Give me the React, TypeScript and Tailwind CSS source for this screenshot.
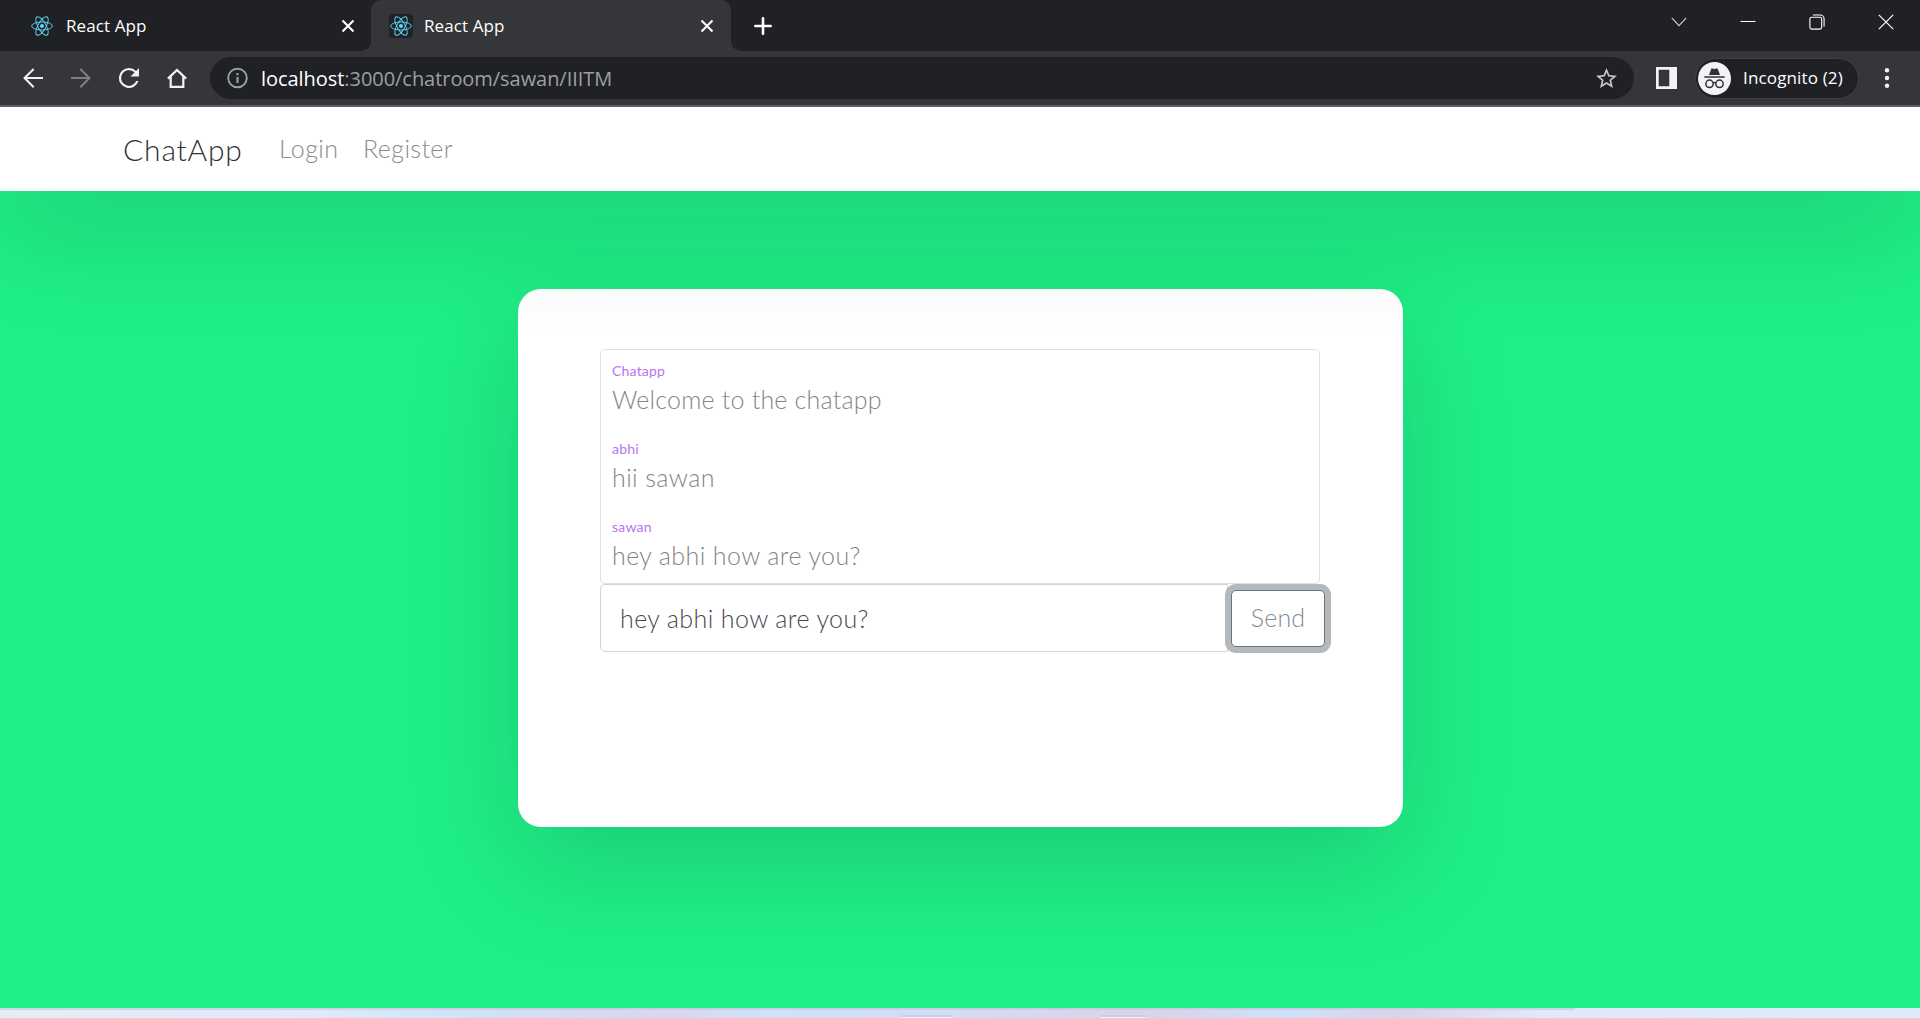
import React, { useState } from 'react';
import clsx from 'clsx';

interface Message {
  user: string;
  text: string;
}

const messages: Message[] = [
  { user: 'Chatapp', text: 'Welcome to the chatapp' },
  { user: 'abhi', text: 'hii sawan' },
  { user: 'sawan', text: 'hey abhi how are you?' },
];

const ReactLogo = () => (
  <svg width="24" height="24" viewBox="0 0 24 24" fill="none" stroke="#61dafb" strokeWidth="0.9">
    <circle cx="12" cy="12" r="2" fill="#61dafb" stroke="none" />
    <ellipse cx="12" cy="12" rx="10.4" ry="4" />
    <ellipse cx="12" cy="12" rx="10.4" ry="4" transform="rotate(60 12 12)" />
    <ellipse cx="12" cy="12" rx="10.4" ry="4" transform="rotate(120 12 12)" />
  </svg>
);

const TabClose = () => (
  <svg width="14" height="14" viewBox="0 0 14 14" stroke="#fff" strokeWidth="2.1">
    <path d="M1.5 1.5l11 11M12.5 1.5l-11 11" />
  </svg>
);

const TabStrip = () => (
  <div className="flex h-[51px] bg-[#202124] text-[17px] text-white">
    <div className="flex w-[371px] items-center pl-[30px] pr-[16px]">
      <ReactLogo />
      <span className="ml-[12px] tracking-[0.1px]">React App</span>
      <span className="ml-auto"><TabClose /></span>
    </div>
    <div className="relative flex w-[360px] items-center rounded-t-[10px] bg-[#35363a] pl-[18px] pr-[17px]">
      <svg className="absolute -left-[10px] bottom-0" width="10" height="10">
        <path d="M10 0v10H0A10 10 0 0 0 10 0z" fill="#35363a" />
      </svg>
      <svg className="absolute -right-[10px] bottom-0" width="10" height="10">
        <path d="M0 0v10h10A10 10 0 0 1 0 0z" fill="#35363a" />
      </svg>
      <span className="rounded-[3px] bg-[#202224]"><ReactLogo /></span>
      <span className="ml-[11px] tracking-[0.1px]">React App</span>
      <span className="ml-auto"><TabClose /></span>
    </div>
    <div className="flex items-center pl-[23px]">
      <svg width="18" height="18" viewBox="0 0 18 18" stroke="#fff" strokeWidth="2.6" strokeLinecap="round">
        <path d="M9 1.3v15.4M1.3 9h15.4" />
      </svg>
    </div>
    <div className="ml-auto flex h-[43px] items-center gap-[53px] pr-[26px]">
      <svg width="16" height="16" viewBox="0 0 16 16" fill="none" stroke="#d0d0d2" strokeWidth="1.1">
        <path d="M.8 3.8L8 11.6l7.2-7.8" />
      </svg>
      <svg width="16" height="16" viewBox="0 0 16 16" stroke="#fff" strokeWidth="1">
        <path d="M.5 7.5h15" />
      </svg>
      <svg width="16" height="16" viewBox="0 0 16 16" fill="none" stroke="#fff" strokeWidth="1.1">
        <rect x=".9" y="3.3" width="11.8" height="11.8" rx="1.8" />
        <path d="M3.8 1h7.3a4 4 0 0 1 4 4v7.4" />
      </svg>
      <svg width="16" height="16" viewBox="0 0 16 16" stroke="#fff" strokeWidth="1.2">
        <path d="M.8.8l14.4 14.4M15.2.8L.8 15.2" />
      </svg>
    </div>
  </div>
);

const Toolbar = () => (
  <div className="flex h-[56px] items-center border-b-2 border-[#5f6063] bg-[#35363a] pl-[21px]">
    <div className="flex gap-6">
      <svg width="24" height="24" viewBox="2.4 2.4 19.2 19.2" fill="#f1f3f4">
        <path d="M20 11.2H7.2l5.9-5.9L12 4.1 4.1 12l7.9 7.9 1.1-1.2-5.9-5.9H20z" />
      </svg>
      <svg width="24" height="24" viewBox="2.4 2.4 19.2 19.2" fill="#7e8083">
        <path d="M4 11.2h12.8l-5.9-5.9L12 4.1l7.9 7.9-7.9 7.9-1.1-1.2 5.9-5.9H4z" />
      </svg>
      <svg width="24" height="24" viewBox="2.4 2.4 19.2 19.2" fill="#f1f3f4">
        <path d="M17.65 6.35A7.96 7.96 0 0 0 12 4a8 8 0 1 0 7.55 10.4h-1.75A6.3 6.3 0 1 1 12 5.7c1.75 0 3.3.7 4.45 1.85L13.2 10.8H20V4z" />
      </svg>
      <svg width="24" height="24" viewBox="0 0 24 24" fill="none" stroke="#f1f3f4" strokeWidth="2.2">
        <path d="M2.9 12.6L12 4l9.1 8.6M5.7 10.5v10.4h12.6V10.5" />
      </svg>
    </div>
    <div className="ml-[21px] flex h-[42px] w-[1424px] items-center rounded-full bg-[#202124] pl-[15px] pr-[15px]">
      <svg width="24" height="24" viewBox="0 0 24 24" fill="none" stroke="#9aa0a6" strokeWidth="1.9">
        <circle cx="12.5" cy="12" r="9.3" />
        <path d="M12.5 10.9v6M12.5 7v2.2" strokeWidth="2.2" />
      </svg>
      <span className="ml-[12px] mt-px text-[20px] tracking-[-0.05px] text-[#9aa0a6]">
        <span className="text-white">localhost</span>:3000/chatroom/sawan/IIITM
      </span>
      <svg className="ml-auto" width="25" height="25" viewBox="0 0 24 24" fill="#c6c8ca">
        <path d="M22 9.24l-7.19-.62L12 2 9.19 8.63 2 9.24l5.46 4.73L5.82 21 12 17.27 18.18 21l-1.63-7.03zM12 15.4l-3.76 2.27 1-4.28-3.32-2.88 4.38-.38L12 6.1l1.71 4.04 4.38.38-3.32 2.88 1 4.28z" />
      </svg>
    </div>
    <svg className="ml-[22px]" width="21" height="22" viewBox="0 0 21 22">
      <path d="M0 0h21v22H0zM2.7 2.7v16.6h10.6V2.7z" fill="#f1f3f4" fillRule="evenodd" />
    </svg>
    <div className="ml-[18px] flex h-[41px] w-[164px] items-center rounded-full border border-[#3f4044] bg-[#202124] pl-[2px]">
      <svg width="33" height="33" viewBox="0 0 33 33" fill="none" stroke="#303134" strokeWidth="1.5">
        <circle cx="16.5" cy="16.5" r="16.5" fill="#f1f3f4" stroke="none" />
        <path d="M11 13l2.2-6.1c.2-.5.6-.7 1.1-.5l2.2.6 2.2-.6c.5-.2.9 0 1.1.5L22 13z" fill="#303134" stroke="none" />
        <path d="M6.3 15h20.4" />
        <circle cx="11.5" cy="21.8" r="3.7" />
        <circle cx="21.5" cy="21.8" r="3.7" />
        <path d="M15.1 21.2c.8-.7 2-.7 2.8 0" />
      </svg>
      <span className="ml-[12px] text-[17px] tracking-[0.15px] text-white">Incognito (2)</span>
    </div>
    <svg className="ml-[16px]" width="24" height="24" viewBox="0 0 24 24" fill="#f1f3f4">
      <circle cx="12" cy="4.2" r="2.2" />
      <circle cx="12" cy="12" r="2.2" />
      <circle cx="12" cy="19.8" r="2.2" />
    </svg>
  </div>
);

const Navbar = () => (
  <nav className="relative flex h-[84px] items-center bg-white pl-[123px] font-['Lato'] font-light shadow-[0_36px_112px_0_rgba(17,12,46,0.16)]">
    <a className="w-[156px] text-[30px] tracking-[0.8px] text-[#333]">ChatApp</a>
    <a className="w-[84px] text-[25px] tracking-[0.4px] text-[#8c8c8c]">Login</a>
    <a className="text-[25px] tracking-[0.4px] text-[#8c8c8c]">Register</a>
  </nav>
);

const ChatBox = () => {
  const [message, setMessage] = useState('hey abhi how are you?');

  return (
    <div className="h-[538px] w-[885px] rounded-[23px] bg-white pl-[82px] pt-[60px] font-['Lato'] shadow-[0_36px_112px_0_rgba(17,12,46,0.16)]">
      <div className="h-[235px] w-[720px] rounded-[5px] border border-[#dfdfdf] pl-[11px] pt-[11px]">
        {messages.map((msg, index) => (
          <div key={index} className="h-[78px]">
            <div className="h-5 text-[14px] leading-5 tracking-[0.2px] text-[#b874f0]">{msg.user}</div>
            <div
              className={clsx(
                'h-9 text-[25px] font-light leading-9 text-[#858585]',
                index === 0 ? 'tracking-[0.2px]' : 'tracking-[0.4px]'
              )}
            >
              {msg.text}
            </div>
          </div>
        ))}
      </div>
      <div className="flex h-[68px] items-center">
        <input
          value={message}
          onChange={e => setMessage(e.target.value)}
          className="h-[68px] w-[628px] rounded-l-[5px] border border-[#ced4da] pl-[19px] text-[25px] font-light tracking-[0.4px] text-[#464a50] outline-none"
        />
        <button className="relative ml-[3px] h-[57px] w-[94px] rounded-[5px] border border-[#6c757d] bg-white text-[25px] font-light tracking-[0.2px] text-[#858c93] shadow-[0_0_0_6px_#b4b9bd]">
          Send
        </button>
      </div>
    </div>
  );
};

// Sliver of the desktop taskbar under the browser window
const Taskbar = () => (
  <div className="flex h-[10px] flex-col bg-[linear-gradient(90deg,#e2edf8_0%,#e1ebf7_16%,#d1e3fa_23%,#d4dbf3_30%,#d6d8ee_35%,#d2e0fa_40%,#d4dbf5_50%,#d6d5e9_60%,#d0dffa_67%,#d6d5e9_73%,#e0e9f7_80%,#deebf9_100%)]">
    <div className="h-[2px] w-[1575px] bg-[#c8c3dc]/60" />
    <div className="flex pl-[902px] pt-[5px]">
      <div className="h-[3px] w-[50px] border-t-2 border-[#c9cfe3] bg-[#f5f0fa]" />
      <div className="ml-[148px] h-[3px] w-[46px] border-t-2 border-[#c9cce0] bg-[#f5f0fa]" />
    </div>
  </div>
);

const App: React.FC = () => {
  return (
    <div className="flex h-[1018px] w-[1920px] flex-col overflow-hidden font-['Open_Sans','Noto_Sans',sans-serif]">
      <TabStrip />
      <Toolbar />
      <div className="flex flex-1 flex-col overflow-hidden bg-[#1ff086]">
        <Navbar />
        <div className="flex pl-[518px] pt-[98px]">
          <ChatBox />
        </div>
      </div>
      <Taskbar />
    </div>
  );
};

export default App;
